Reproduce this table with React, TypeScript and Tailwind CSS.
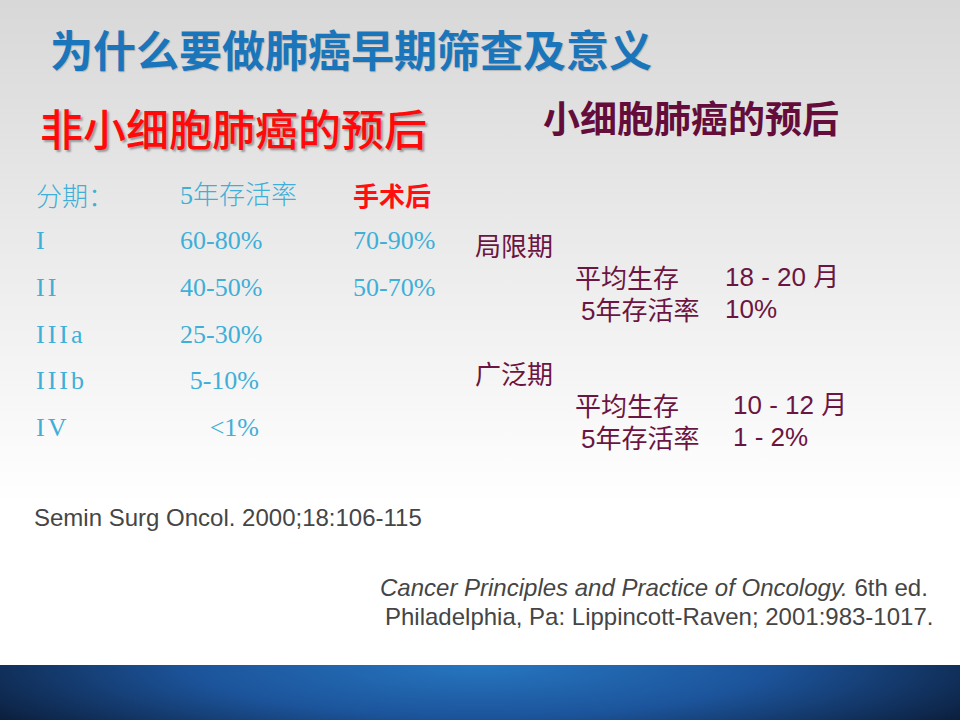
import React from "react"

const cjkSans = "font-['Noto_Sans_CJK_SC',sans-serif]"

const stages = [
  { stage: "I", rate: "60-80%", surgery: "70-90%" },
  { stage: "II", rate: "40-50%", surgery: "50-70%" },
  { stage: "IIIa", rate: "25-30%", surgery: "" },
  { stage: "IIIb", rate: "5-10%", surgery: "" },
  { stage: "IV", rate: "<1%", surgery: "" },
]

function SmallCellGroup({ name, survival, rate, offset }: { name: string; survival: string; rate: string; offset: string }) {
  return (
    <div>
      <div className="h-[32px] leading-[32px]">{name}</div>
      <div className="flex h-[32px] leading-[32px] pl-[100px] whitespace-nowrap">
        <span className="w-[150px]">平均生存</span>
        <span className={`${offset} font-['Liberation_Sans','Noto_Sans_CJK_SC',sans-serif]`}>{survival}</span>
      </div>
      <div className="flex h-[32px] leading-[32px] pl-[106px] whitespace-nowrap">
        <span className="w-[144px]">
          <span className="font-['Liberation_Sans',sans-serif]">5</span>年存活率
        </span>
        <span className={`${offset} font-['Liberation_Sans',sans-serif]`}>{rate}</span>
      </div>
    </div>
  )
}

export default function App() {
  return (
    <div className="w-[960px] h-[720px] flex flex-col overflow-hidden bg-[linear-gradient(to_bottom,#d8d8d8,#eeeeee_40%,#ffffff_70%)]">
      <div className="h-[665px]">
        {/* Slide title */}
        <h1
          className={`pl-[50px] pt-[27px] text-[43px] leading-none font-bold text-[#1b75bb] whitespace-nowrap ${cjkSans} [text-shadow:1px_1px_1px_rgba(0,0,0,0.18)]`}
        >
          为什么要做肺癌早期筛查及意义
        </h1>

        <div className="flex items-start mt-[26px]">
          {/* Non-small cell column */}
          <div className="w-[475px] shrink-0 pl-[36px]">
            <h2
              className={`ml-[4px] mt-[10px] text-[43px] leading-none font-medium text-[#ff0a0a] whitespace-nowrap ${cjkSans} [text-shadow:2px_2px_2px_#9a9a9a]`}
            >
              非小细胞肺癌的预后
            </h2>

            <div className="mt-[22px] text-[26px] text-[#3fafd8] whitespace-nowrap font-['Liberation_Serif','Noto_Sans_CJK_SC',serif]">
              <div className="flex items-center h-[46.6px]">
                <span className={`w-[144px] font-light ${cjkSans}`}>分期：</span>
                <span className="w-[173px] font-light">
                  5<span className={cjkSans}>年存活率</span>
                </span>
                <span className={`font-bold text-[#ff1010] ${cjkSans}`}>手术后</span>
              </div>
              {stages.map((s) => (
                <div key={s.stage} className="flex items-center h-[46.6px]">
                  <span className="w-[144px] tracking-[3px]">{s.stage}</span>
                  <span className="w-[173px]">
                    <span className="inline-block w-[79px] text-right">{s.rate}</span>
                  </span>
                  <span>{s.surgery}</span>
                </div>
              ))}
            </div>
          </div>

          {/* Small cell column */}
          <div className={`flex-1 text-[#6b1542] ${cjkSans}`}>
            <h2 className="ml-[68px] mt-[3px] text-[37px] leading-none font-bold text-[#650d3a] whitespace-nowrap">小细胞肺癌的预后</h2>
            <div className="mt-[93px] text-[26px]">
              <SmallCellGroup name="局限期" survival="18 - 20 月" rate="10%" offset="ml-0" />
              <div className="h-[32px]" />
              <SmallCellGroup name="广泛期" survival="10 - 12 月" rate="1 - 2%" offset="ml-[8px]" />
            </div>
          </div>
        </div>

        {/* References */}
        <div className="font-['Liberation_Sans',sans-serif] text-[24px] leading-[29px] text-[#454545]">
          <p className="pl-[34px] mt-[50px]">Semin Surg Oncol. 2000;18:106-115</p>
          <div className="pl-[380px] mt-[41px]">
            <p>
              <span className="italic">Cancer Principles and Practice of Oncology.</span> 6th ed.
            </p>
            <p className="ml-[5px]">Philadelphia, Pa: Lippincott-Raven; 2001:983-1017.</p>
          </div>
        </div>
      </div>

      {/* Bottom band */}
      <div className="h-[55px] bg-[radial-gradient(ellipse_60%_190%_at_50%_0%,#2676c0_0%,#1c549b_50%,#0b1d3a_100%)]" />
    </div>
  )
}
